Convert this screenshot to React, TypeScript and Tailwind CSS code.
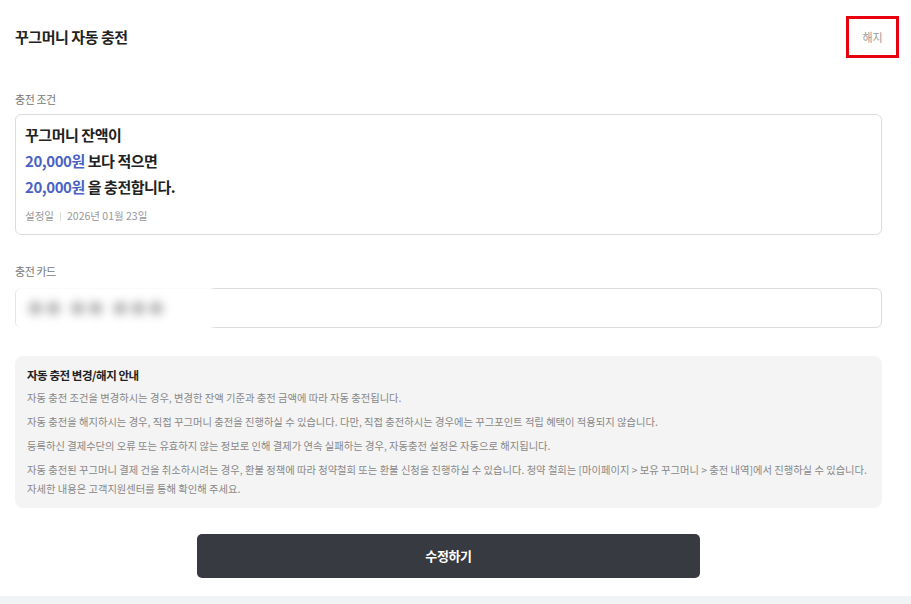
import React from 'react';

const font = { fontFamily: '"Noto Sans CJK KR", "Noto Sans", sans-serif' };

const notices: React.ReactNode[] = [
    '자동 충전 조건을 변경하시는 경우, 변경한 잔액 기준과 충전 금액에 따라 자동 충전됩니다.',
    '자동 충전을 해지하시는 경우, 직접 꾸그머니 충전을 진행하실 수 있습니다. 다만, 직접 충전하시는 경우에는 꾸그포인트 적립 혜택이 적용되지 않습니다.',
    '등록하신 결제수단의 오류 또는 유효하지 않는 정보로 인해 결제가 연속 실패하는 경우, 자동충전 설정은 자동으로 해지됩니다.',
    <>
        <span className="whitespace-nowrap">자동 충전된 꾸그머니 결제 건을 취소하시려는 경우, 환불 정책에 따라 청약철회 또는 환불 신청을 진행하실 수 있습니다. 청약 철회는 [마이페이지 &gt; 보유 꾸그머니 &gt; 충전 내역]에서 진행하실 수 있습니다.</span>
        <br />
        자세한 내용은 고객지원센터를 통해 확인해 주세요.
    </>,
];

const Amount = ({ children }: { children: React.ReactNode }) => (
    <span className="text-[#4a62c4]">{children}</span>
);

export default function App() {
    return (
        <div className="min-h-screen bg-white flex flex-col" style={font}>
            <div className="flex items-center justify-between h-[74px] pl-[15px] pr-[12px]">
                <h1 className="text-[15px] font-bold text-[#222] tracking-[-0.03em]">꾸그머니 자동 충전</h1>
                <button className="w-[53px] h-[42px] border-[3px] border-[#e8000f] flex items-center justify-center text-[11px] text-[#999]">
                    해지
                </button>
            </div>

            <div className="ml-[15px] w-[867px]">
                <p className="mt-[17px] mb-[7px] text-[11px] leading-4 text-[#777] tracking-[-0.04em]">충전 조건</p>
                <div className="border border-[#dcdcdc] rounded-[6px] px-[9px] pt-[7px] pb-[10px]">
                    <div className="text-[15px] leading-[26px] font-bold text-[#222] tracking-[-0.03em]">
                        <p>꾸그머니 잔액이</p>
                        <p><Amount>20,000원</Amount> 보다 적으면</p>
                        <p><Amount>20,000원</Amount> 을 충전합니다.</p>
                    </div>
                    <p className="mt-2 text-[10.5px] leading-4 text-[#999] flex items-center">
                        설정일
                        <span className="mx-[6px] w-px h-[9px] bg-[#ddd]" />
                        2026년 01월 23일
                    </p>
                </div>

                <p className="mt-[28px] mb-[9px] text-[11px] leading-4 text-[#777] tracking-[-0.04em]">충전 카드</p>
                <div className="relative h-[40px] border border-[#dcdcdc] rounded-[6px] flex items-center pl-[12px]">
                    <div className="absolute left-[1px] -top-[3px] w-[196px] h-[46px] bg-white blur-[2px]" />
                    <span className="relative text-[15px] text-[#b5b5b5] blur-[5px] tracking-[0.2em]">●● ●● ●●●</span>
                </div>

                <div className="mt-[28px] bg-[#f4f4f4] rounded-[8px] px-[12px] pt-[10px] pb-[10px]">
                    <p className="text-[11.5px] leading-[18px] font-bold text-[#222] tracking-[-0.04em]">자동 충전 변경/해지 안내</p>
                    <div className="mt-[4px] flex flex-col gap-[5px]">
                        {notices.map((n, i) => (
                            <p key={i} className="text-[10.3px] leading-[19px] text-[#888]">{n}</p>
                        ))}
                    </div>
                </div>

                <div className="mt-[26px] flex justify-center">
                    <button className="w-[503px] h-[44px] rounded-[5px] bg-[#373a40] text-white text-[13px] font-bold tracking-[-0.03em]">
                        수정하기
                    </button>
                </div>
            </div>

            <div className="mt-[18px] flex-1 bg-[#f2f3f5] min-h-[8px]" />
        </div>
    );
}
